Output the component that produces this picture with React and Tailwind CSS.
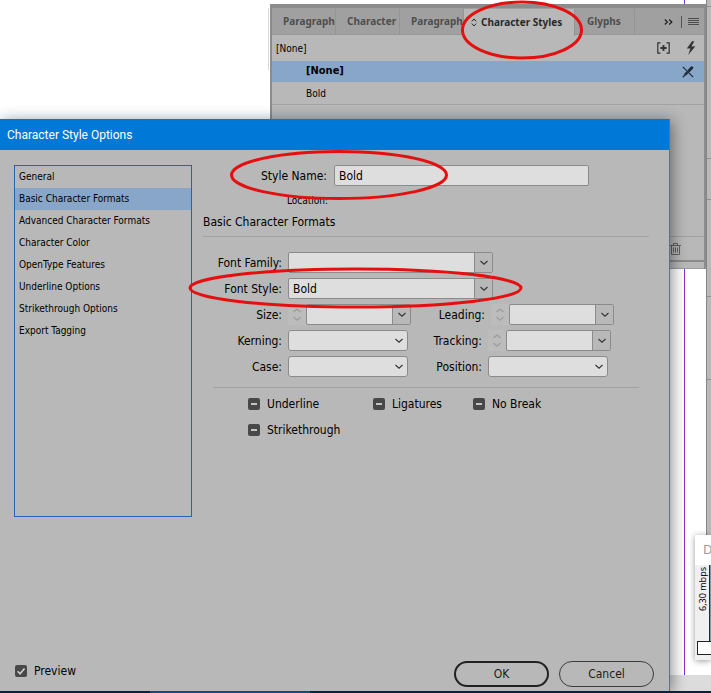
import { useState } from "react";
import clsx from "clsx";

const SECTIONS = [
  "General",
  "Basic Character Formats",
  "Advanced Character Formats",
  "Character Color",
  "OpenType Features",
  "Underline Options",
  "Strikethrough Options",
  "Export Tagging"
];

export default function App() {
  return (
    <main className="relative h-screen min-h-[620px] overflow-hidden bg-white text-black">
      <Workspace />
      <StylesPanel />
      <BandwidthWidget />
      <StyleOptionsDialog />
      <Annotations />
      <div className="absolute inset-x-0 bottom-0 flex h-[2px] bg-[#0b2238]">
        <span className="ml-[150px] w-40 bg-[#0d4a86]" />
      </div>
    </main>
  );
}

function Workspace() {
  return (
    <>
      <div className="absolute top-0 bottom-[18px] left-[684px] w-px bg-[#7a35c4]" />
      <div className="absolute top-2 left-[268px] h-[62px] w-px bg-[#d9d9e2]" />
      <div className="absolute inset-x-0 bottom-[2px] h-4 bg-[#dcdcdc]" />
      <div className="absolute top-0 right-0 flex h-[536px] w-[5px] flex-col border-l border-[#858585] bg-[#b9b9b9]">
        <span className="h-[7px] border-b border-[#8f8f8f]" />
        <span className="h-[152px] border-b border-[#8f8f8f]" />
        <span className="h-[41px] border-b border-[#8f8f8f]" />
        <span className="h-[97px] border-b border-[#8f8f8f]" />
        <span className="h-[83px] border-b border-[#8f8f8f]" />
      </div>
    </>
  );
}

function Tab({ children, className }) {
  return (
    <button
      type="button"
      className={clsx("h-full shrink-0 border-r border-[#949494] text-left whitespace-nowrap", className)}
    >
      {children}
    </button>
  );
}

function StylesPanel() {
  return (
    <section className="absolute top-1 right-[5px] left-[270px] flex h-[265px] flex-col border-x-2 border-t-4 border-[#8c8c8c] bg-[#b8b8b8] font-['DejaVu_Sans_Condensed','Noto_Sans',sans-serif] text-[11px]">
      <div className="flex h-[27px] shrink-0 items-center border-b border-[#989898] bg-[#a0a0a0] pt-px font-['Noto_Sans','Open_Sans',sans-serif] text-[10px] font-bold text-[#4e4e4e]">
        <Tab className="w-16 pl-[11px]">Paragraph</Tab>
        <Tab className="w-16 pl-[11px]">Character</Tab>
        <Tab className="w-16 pl-[11px]">Paragraph</Tab>
        <button
          type="button"
          className="-mb-px flex h-[27px] w-[111px] shrink-0 items-center gap-1 border-r border-[#949494] bg-[#b8b8b8] pl-[7px] whitespace-nowrap text-[#2a2a2a]"
        >
          <svg className="h-[9px] w-[6px] shrink-0" viewBox="0 0 6 9" fill="none" stroke="currentColor">
            <path d="M.8 3.4 3 1l2.2 2.4M.8 5.6 3 8l2.2-2.4" />
          </svg>
          Character Styles
        </button>
        <Tab className="w-[60px] pl-3">Glyphs</Tab>
        <button type="button" aria-label="More tabs" className="ml-auto text-[#222]">
          <svg className="h-2 w-[9px]" viewBox="0 0 9 8" fill="none" stroke="currentColor" strokeWidth="1.3">
            <path d="m.8 1.5 2.6 2.5L.8 6.5M5.2 1.5 7.8 4 5.2 6.5" />
          </svg>
        </button>
        <span className="ml-2 h-3 w-px bg-[#555]" />
        <button type="button" aria-label="Panel menu" className="mr-[5px] ml-[6px] text-[#4c4c4c]">
          <svg className="h-[9px] w-[11px]" viewBox="0 0 11 9" stroke="currentColor">
            <path d="M0 1.5h11M0 3.5h11M0 5.5h11M0 7.5h11" shapeRendering="crispEdges" />
          </svg>
        </button>
      </div>

      <div className="flex h-[26px] shrink-0 items-center pl-1 text-[10px]">
        <span className="grow">[None]</span>
        <button type="button" aria-label="Create group" className="text-[#333]">
          <svg className="h-3 w-[13px]" viewBox="0 0 13 12" fill="none" stroke="currentColor" strokeWidth="1.2">
            <path d="M3.5.8H.8v10.4h2.7M9.5.8h2.7v10.4H9.5" />
            <path d="M3.4 6h6.2M6.5 2.9v6.2" strokeWidth="1.8" />
          </svg>
        </button>
        <button type="button" aria-label="Clear overrides" className="mr-2 ml-4 text-[#333]">
          <svg className="h-[14px] w-[10px]" viewBox="0 0 10 14" fill="currentColor">
            <path d="M6.2 0 .8 7.6l3.6-.2L2.2 14 9.4 5.2l-4 .4L8.2.4z" />
          </svg>
        </button>
      </div>

      <div className="flex h-[21px] shrink-0 items-center bg-[#88a6c8] pl-[34px] font-bold">
        <span className="grow">[None]</span>
        <svg className="mr-[10px] h-3 w-3 text-[#1f2c3c]" viewBox="0 0 12 12" fill="none" stroke="currentColor">
          <path d="M.8.8 11.2 11.2" strokeWidth="1.2" />
          <path d="M9.8 1.8 7.2 4.6" strokeWidth="3" strokeLinecap="round" />
          <path d="M5.6 6.2 3 8.8" strokeWidth="2.6" />
          <path d="M3.2 8.6.8 11.2" strokeWidth="1.3" />
        </svg>
      </div>
      <div className="flex h-[23px] shrink-0 items-center border-b border-[#a3a3a3] pl-[34px] text-[10px]">Bold</div>

      <div className="mt-auto flex h-6 items-center justify-end border-t border-[#a0a0a0] pr-[23px]">
        <button type="button" aria-label="Delete style" className="text-[#626262]">
          <svg className="h-3 w-[11px]" viewBox="0 0 11 12" fill="none" stroke="currentColor">
            <path d="M0 2.5h11M3.5 2V.5h4V2M1.5 2.5v9h8v-9M3.5 4.5v5M5.5 4.5v5M7.5 4.5v5" />
          </svg>
        </button>
      </div>
      <div className="h-[9px] border-t-2 border-b border-t-[#8c8c8c] border-b-[#9c9c9c]" />
    </section>
  );
}

function BandwidthWidget() {
  return (
    <aside className="absolute top-[535px] right-0 flex h-[125px] w-4 flex-col overflow-hidden bg-[#f0f0f0] shadow-[0_1px_6px_rgba(0,0,0,0.4)]">
      <div className="h-[30px] shrink-0 bg-white pt-[5px] pl-2 font-['Noto_Sans',sans-serif] text-[13px] text-[#999]">D</div>
      <div className="flex h-[76px] shrink-0 justify-between">
        <span className="w-[14px] pb-[30px] pl-[2px] font-['Noto_Sans',sans-serif] text-[9px] leading-[12px] whitespace-nowrap [writing-mode:sideways-lr] text-black">6,30 mbps</span>
        <span className="w-[2px] shrink-0 border-l border-[#1b2d38] bg-[#7c9ba0]" />
      </div>
      <div className="ml-[2px] h-[14px] border border-r-0 border-[#222] bg-white" />
    </aside>
  );
}

function Chevron({ up, className }) {
  return (
    <svg className={clsx("h-[5px] w-2", className)} viewBox="0 0 8 5" fill="none" stroke="currentColor" strokeWidth="1.1">
      <path d={up ? "M.5 4 4 1l3.5 3" : "M.5 1 4 4.2 7.5 1"} />
    </svg>
  );
}

function Label({ id, className, children }) {
  return (
    <label htmlFor={id} className={clsx("shrink-0 text-right whitespace-nowrap", className)}>
      {children}
    </label>
  );
}

function Combo({ id, value, className }) {
  return (
    <div className={clsx("flex h-[21px] rounded-[2px] border border-[#8b8b8b] bg-[#dedede]", className)}>
      <input id={id} defaultValue={value} className="w-full min-w-0 rounded-l-[2px] bg-transparent pl-1 outline-none" />
      <button
        type="button"
        aria-label="Show choices"
        className="flex w-[18px] shrink-0 items-center justify-center border-l border-[#8b8b8b] bg-[#b8b8b8] text-[#333]"
      >
        <Chevron />
      </button>
    </div>
  );
}

function SpinCombo({ id }) {
  return (
    <div className="flex">
      <div className="flex w-[18px] flex-col items-center justify-between bg-[#bcbcbc] py-1 text-[#9a9a9a]">
        <Chevron up />
        <Chevron />
      </div>
      <Combo id={id} className="w-[105px]" />
    </div>
  );
}

function Select({ id }) {
  return (
    <div className="relative">
      <select id={id} className="block h-[21px] w-[120px] appearance-none rounded-[3px] border border-[#8b8b8b] bg-[#dedede] outline-none" />
      <Chevron className="pointer-events-none absolute top-2 right-[5px] text-[#333]" />
    </div>
  );
}

function MixedCheck({ label, className }) {
  return (
    <label className={clsx("flex items-center gap-[7px]", className)}>
      <span className="relative flex">
        <input type="checkbox" className="size-3 appearance-none rounded-[2px] bg-[#484848]" />
        <span className="pointer-events-none absolute top-[5px] left-[3px] h-[2px] w-[6px] bg-[#c4c4c4]" />
      </span>
      {label}
    </label>
  );
}

function StyleOptionsDialog() {
  const [section, setSection] = useState("Basic Character Formats");
  const [preview, setPreview] = useState(true);

  return (
    <section className="absolute top-[119px] right-[41px] bottom-[2px] left-0 flex flex-col border-r border-[#2f7fc6] bg-[#b8b8b8] font-['DejaVu_Sans_Condensed','Noto_Sans',sans-serif] text-[12px] leading-4 shadow-[2px_2px_14px_rgba(0,0,0,0.45)]">
      <header className="flex h-[31px] shrink-0 items-center bg-[#0078d7] pl-[7px] font-['Roboto','Noto_Sans',sans-serif] text-[12px] text-white">
        <h1>Character Style Options</h1>
      </header>

      <div className="flex grow gap-[11px] pt-[15px] pr-5 pl-[14px]">
        <nav className="h-[352px] w-[178px] shrink-0 border border-[#2464b0] text-[10px]">
          {SECTIONS.map((name) => (
            <button
              key={name}
              type="button"
              onClick={() => setSection(name)}
              className={clsx("block h-[22px] w-full pl-1 text-left", name === section && "bg-[#88a6c8]")}
            >
              {name}
            </button>
          ))}
        </nav>

        <form className="min-w-0 grow">
          <div className="flex items-center gap-[7px]">
            <Label id="style-name" className="w-[124px]">Style Name:</Label>
            <input
              id="style-name"
              defaultValue="Bold"
              className="h-[21px] w-[255px] rounded-[2px] border border-[#8b8b8b] bg-[#dedede] pl-1 outline-none"
            />
          </div>
          <p className="mt-[7px] w-[125px] text-right text-[10px]">Location:</p>
          <h2 className="mt-[5px]">{section}</h2>
          <hr className="mt-[6px] border-[#a2a2a2]" />

          <div className="mt-[15px] flex flex-col gap-[5px]">
            <div className="flex items-center gap-[6px]">
              <Label id="family" className="w-[79px]">Font Family:</Label>
              <Combo id="family" className="w-[205px]" />
            </div>
            <div className="flex items-center gap-[6px]">
              <Label id="style" className="w-[79px]">Font Style:</Label>
              <Combo id="style" value="Bold" className="w-[205px]" />
            </div>
            <div className="flex items-center">
              <Label id="size" className="mr-[6px] w-[79px]">Size:</Label>
              <SpinCombo id="size" />
              <Label id="leading" className="mr-[6px] w-[74px]">Leading:</Label>
              <SpinCombo id="leading" />
            </div>
            <div className="flex items-center">
              <Label id="kerning" className="mr-[6px] w-[79px]">Kerning:</Label>
              <Select id="kerning" />
              <Label id="tracking" className="mr-[6px] w-[74px]">Tracking:</Label>
              <SpinCombo id="tracking" />
            </div>
            <div className="flex items-center">
              <Label id="case" className="mr-[6px] w-[79px]">Case:</Label>
              <Select id="case" />
              <Label id="position" className="mr-[6px] w-[74px]">Position:</Label>
              <Select id="position" />
            </div>
          </div>

          <hr className="mx-[10px] mt-[10px] border-[#a2a2a2]" />

          <div className="mt-2 ml-[45px] grid grid-cols-[125px_100px_1fr] gap-y-[10px] whitespace-nowrap">
            <MixedCheck label="Underline" />
            <MixedCheck label="Ligatures" />
            <MixedCheck label="No Break" />
            <MixedCheck label="Strikethrough" />
          </div>
        </form>
      </div>

      <footer className="flex items-center justify-between pr-[15px] pb-1 pl-[15px]">
        <label className="mb-[6px] flex items-center gap-[7px]">
          <span className="relative flex">
            <input
              type="checkbox"
              checked={preview}
              onChange={(e) => setPreview(e.target.checked)}
              className="size-3 appearance-none rounded-[2px] bg-[#484848]"
            />
            {preview ? (
              <svg className="pointer-events-none absolute inset-0 size-3" viewBox="0 0 12 12" fill="none" stroke="#d0d0d0" strokeWidth="1.6">
                <path d="m2.6 6.2 2.5 2.5 4.4-5.2" />
              </svg>
            ) : null}
          </span>
          Preview
        </label>
        <div className="flex gap-[10px] text-[#1c1c1c]">
          <button type="button" className="h-[26px] w-[95px] rounded-full border-2 border-[#222]">OK</button>
          <button type="button" className="h-[26px] w-[95px] rounded-full border border-[#3c3c3c]">Cancel</button>
        </div>
      </footer>
    </section>
  );
}

// Red rings drawn over the windows
function Annotations() {
  return (
    <svg className="pointer-events-none absolute top-0 left-0" width="711" height="320" fill="none" stroke="#e60f0f" strokeWidth="3">
      <ellipse cx="522" cy="30" rx="59.5" ry="28" />
      <ellipse cx="339" cy="175" rx="107.5" ry="23.5" />
      <ellipse cx="355.5" cy="288" rx="165.5" ry="19" />
    </svg>
  );
}
